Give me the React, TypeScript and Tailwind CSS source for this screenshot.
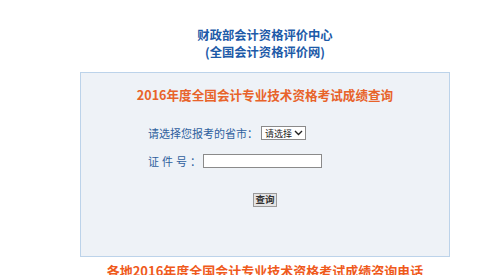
export default function App() {
  return (
    <div
      className="min-h-screen w-[500px] bg-white"
      style={{ fontFamily: '"Noto Sans CJK SC", "Noto Sans", sans-serif' }}
    >
      <div className="ml-[80px] w-[370px] pt-[27px]">
        {/* Header */}
        <div className="text-center text-[12.3px] leading-[17px] font-bold text-[#1d5aa8]">
          <p>财政部会计资格评价中心</p>
          <p>(全国会计资格评价网)</p>
        </div>

        {/* Query box */}
        <div className="mt-[11px] h-[185px] border border-[#bcd3ea] bg-[#eef2f7]">
          <h1 className="pt-[13px] text-center text-[12.6px] leading-[18px] font-bold text-[#e8632a]">
            2016年度全国会计专业技术资格考试成绩查询
          </h1>

          <div className="mt-[22px] pl-[67px] text-[11px] text-[#2f5f9e]">
            <div className="flex h-[14px] items-center">
              <span className="whitespace-nowrap">请选择您报考的省市：</span>
              <div className="ml-[3px] flex h-[14px] w-[45px] shrink-0 items-center justify-between whitespace-nowrap border border-[#8a8a8a] bg-white pl-[3px] pr-[2px] text-[9px] leading-none text-[#222]">
                <span>请选择</span>
                <svg width="9" height="6" viewBox="0 0 9 6" fill="none">
                  <path d="M1 1l3.5 3.5L8 1" stroke="#222" strokeWidth="1.4" />
                </svg>
              </div>
            </div>

            <div className="mt-[14px] flex h-[14px] items-center">
              <span className="tracking-[3px]">证件号</span>
              <span>：</span>
              <input
                type="text"
                className="ml-[2px] h-[14px] w-[119px] border border-[#8a8a8a] bg-white outline-none"
              />
            </div>
          </div>

          <div className="mt-[25px] flex justify-center">
            <button className="h-[14px] w-[24px] border border-[#9a9a9a] bg-[#e4e4e4] text-[9.5px] leading-none font-bold text-[#333]">
              查询
            </button>
          </div>
        </div>

        {/* Bottom heading */}
        <h2 className="mt-[5px] text-center text-[13px] leading-[18px] font-bold text-[#ef5a1c]">
          各地2016年度全国会计专业技术资格考试成绩咨询电话
        </h2>
      </div>
    </div>
  );
}
